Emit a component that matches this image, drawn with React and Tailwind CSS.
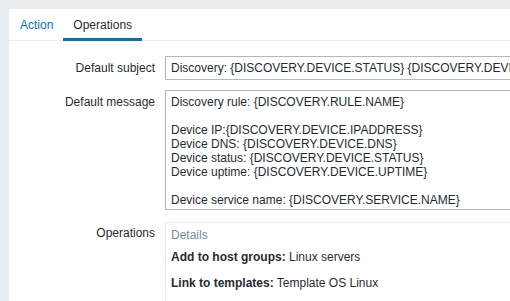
import React from 'react'

const TEXT = 'text-[#1f2c33]'

// Etiquetas de la columna izquierda
function Label({ children, className = '' }) {
  return (
    <div className={`w-[146px] shrink-0 text-right leading-[14px] ${TEXT} ${className}`}>
      {children}
    </div>
  )
}

const MESSAGE = [
  'Discovery rule: {DISCOVERY.RULE.NAME}',
  '',
  'Device IP:{DISCOVERY.DEVICE.IPADDRESS}',
  'Device DNS: {DISCOVERY.DEVICE.DNS}',
  'Device status: {DISCOVERY.DEVICE.STATUS}',
  'Device uptime: {DISCOVERY.DEVICE.UPTIME}',
  '',
  'Device service name: {DISCOVERY.SERVICE.NAME}',
]

export default function App() {
  return (
    <div
      className="w-[510px] h-[301px] overflow-hidden bg-[#ebeef0] text-[12px]"
      style={{ fontFamily: '"Liberation Sans", Arial, sans-serif' }}
    >
      <div className="ml-[9px] mt-[9px] w-[600px] h-[300px] bg-white">

        {/* Pestañas */}
        <div className="flex pl-px border-b border-[#ebeef0] h-[32px]">
          <div className="px-[10px] pt-[9px] leading-[14px] text-[#0275b8]">Action</div>
          <div className={`px-[10px] pt-[9px] leading-[14px] h-[32px] border-b-[3px] border-[#0275b8] ${TEXT}`}>
            Operations
          </div>
        </div>

        {/* Formulario */}
        <div className="pt-[15px]">
          <div className="flex items-center h-[24px]">
            <Label>Default subject</Label>
            <div className={`ml-[10px] w-[420px] h-[24px] border border-[#acbbc2] px-[5px] leading-[22px] whitespace-nowrap overflow-hidden ${TEXT}`}>
              Discovery: {'{DISCOVERY.DEVICE.STATUS}'} {'{DISCOVERY.DEVICE.IPADDRESS}'}
            </div>
          </div>

          <div className="flex mt-[10px]">
            <Label className="pt-[5px]">Default message</Label>
            <div className={`ml-[10px] w-[420px] h-[120px] border border-[#acbbc2] px-[5px] pt-[4px] leading-[14px] whitespace-pre overflow-hidden ${TEXT}`}>
              {MESSAGE.map((l, i) => (
                <div key={i} className="h-[14px]">{l}</div>
              ))}
            </div>
          </div>

          <div className="flex mt-[12px]">
            <Label className="pt-[4px]">Operations</Label>
            <div className={`ml-[10px] w-[420px] h-[100px] border border-[#ebeef0] px-[5px] pt-[5px] leading-[14px] ${TEXT}`}>
              <div className="text-[#768d99]">Details</div>
              <div className="mt-[8px]"><span className="font-bold">Add to host groups:</span> Linux servers</div>
              <div className="mt-[12px]"><span className="font-bold">Link to templates:</span> Template OS Linux</div>
            </div>
          </div>
        </div>

      </div>
    </div>
  )
}
